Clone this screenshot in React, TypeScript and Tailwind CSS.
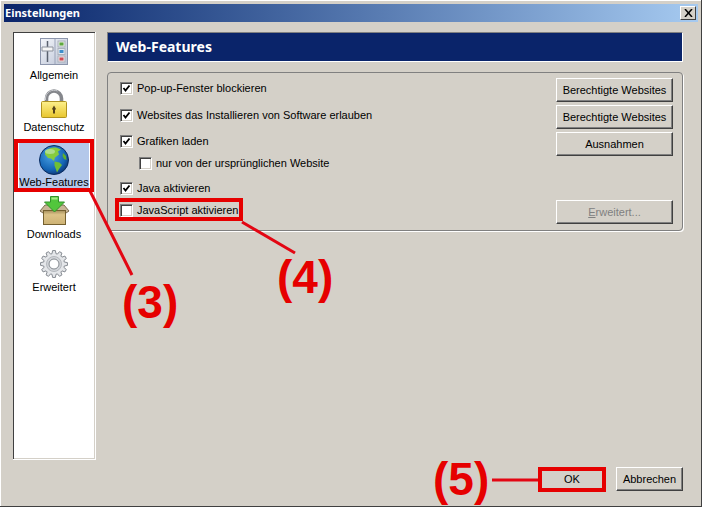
import React from "react";

const sunken = "shadow-[inset_1px_1px_0_#404040,inset_-1px_-1px_0_#d4d0c8]";

function SlidersIcon() {
  return (
    <svg width="28" height="27" viewBox="0 0 28 27" className="shrink-0">
      <defs>
        <linearGradient id="panel" x1="0" y1="0" x2="1" y2="1">
          <stop offset="0" stopColor="#f3f5fa" />
          <stop offset="1" stopColor="#bcc4d6" />
        </linearGradient>
      </defs>
      <rect x="0.5" y="0.5" width="27" height="26" fill="url(#panel)" stroke="#8d96ac" />
      <path d="M15 1v25" stroke="#9aa3b8" />
      <path d="M7.500 3v21" stroke="#59606e" strokeWidth="1.500" />
      <path d="M2 9h11v4H2z" fill="#f6f6f6" stroke="#8c919c" />
      <rect x="18" y="3" width="7" height="6" fill="#e6ebe4" stroke="#aab2bc" />
      <rect x="19.500" y="4.500" width="4" height="3" fill="#5da83d" />
      <rect x="18" y="10.500" width="7" height="6" fill="#e2e8f0" stroke="#aab2bc" />
      <rect x="19.500" y="12" width="4" height="3" fill="#3d8ecb" />
      <rect x="18" y="18" width="7" height="6" fill="#efe2e4" stroke="#aab2bc" />
      <rect x="19.500" y="19.500" width="4" height="3" fill="#cf4a52" />
    </svg>
  );
}

function LockIcon() {
  return (
    <svg width="26" height="29" viewBox="0 0 26 29" className="shrink-0">
      <defs>
        <linearGradient id="brass" x1="0" y1="0" x2="0" y2="1">
          <stop offset="0" stopColor="#fdf08c" />
          <stop offset="1" stopColor="#e8c62e" />
        </linearGradient>
      </defs>
      <path d="M5.500 14V9.500a7.500 7.500 0 0 1 15 0V14" fill="none" stroke="#85878c" strokeWidth="3.600" />
      <path d="M4.500 11V9a8.500 8.500 0 0 1 12-7" fill="none" stroke="#c9cbd0" strokeWidth="1" />
      <rect x="0.500" y="12.500" width="25" height="16" rx="1" fill="url(#brass)" stroke="#b09420" />
      <path d="M13 16.500l2 3.500-1 1v3.500h-2V21l-1-1z" fill="#54421a" />
    </svg>
  );
}

function GlobeIcon() {
  return (
    <svg width="30" height="30" viewBox="0 0 30 30" className="shrink-0">
      <defs>
        <radialGradient id="sea" cx="0.4" cy="0.35" r="0.7">
          <stop offset="0" stopColor="#4aa2e4" />
          <stop offset="0.7" stopColor="#1464b4" />
          <stop offset="1" stopColor="#0c3270" />
        </radialGradient>
      </defs>
      <circle cx="15" cy="15" r="14.500" fill="url(#sea)" stroke="#0a2c60" />
      <path d="M6 6c3-2.500 7-4 11-3.500l5 2-3 2 1 3-4 3-1 3.500-3-2.500-3-.5-3-3.500z" fill="#86cc3e" />
      <path d="M15.500 16.500l5 1 2.500 2.500-3 4-2 3.500-1-3-1.500-4z" fill="#6fbe34" />
      <path d="M24 8l3 3 .5 4-2.500-1-1.500-3z" fill="#5fae2e" />
      <ellipse cx="11" cy="6.500" rx="5" ry="2.500" fill="#e8f8ff" opacity="0.4" />
    </svg>
  );
}

function BoxIcon() {
  return (
    <svg width="31" height="29" viewBox="0 0 31 29" className="shrink-0">
      <defs>
        <linearGradient id="carton" x1="0" y1="0" x2="0" y2="1">
          <stop offset="0" stopColor="#a58e5c" />
          <stop offset="0.3" stopColor="#dcc388" />
          <stop offset="1" stopColor="#cdb274" />
        </linearGradient>
      </defs>
      <path d="M1 15l5-6h19l5 6-3 2H4z" fill="#c8b596" stroke="#7c6c50" />
      <rect x="4.500" y="14.500" width="22" height="14" fill="url(#carton)" stroke="#75602f" />
      <path d="M11.500.500h8v5.500h6l-10 10-10-10h6z" fill="#52c63c" stroke="#33912a" />
      <path d="M12.500 1.500h6v2h-6z" fill="#a4ea84" />
    </svg>
  );
}

// twelve teeth, outer radius 13.5, root radius 10.5
function gearPath() {
  const pts: string[] = [];
  for (let i = 0; i < 12; i++) {
    const a = (i * Math.PI) / 6;
    const step = Math.PI / 6;
    const at = (r: number, t: number) => `${(14 + r * Math.cos(t)).toFixed(2)} ${(14 + r * Math.sin(t)).toFixed(2)}`;
    pts.push(at(10.5, a - step * 0.36), at(13.5, a - step * 0.2), at(13.5, a + step * 0.2), at(10.5, a + step * 0.36));
  }
  return `M${pts.join("L")}Z`;
}

function GearIcon() {
  return (
    <svg width="28" height="28" viewBox="0 0 28 28" className="shrink-0">
      <path d={gearPath()} fill="#e4e6e9" stroke="#868b92" />
      <circle cx="14" cy="14" r="7.500" fill="#d2d5d9" stroke="#b4b8bd" />
      <circle cx="14" cy="14" r="5" fill="#ffffff" stroke="#858a90" />
    </svg>
  );
}

function NavItem({ icon, label, h, gap, active }: { icon: React.ReactNode; label: string; h: string; gap?: string; active?: boolean }) {
  return (
    <div className={`flex flex-col items-center justify-end whitespace-nowrap ${h}`}>
      {active ? (
        <div className="flex h-[47px] w-[70px] flex-col items-center bg-[#b4c8ea] pt-[3px]">
          {icon}
          <span className="mt-[1px] leading-[13px]">{label}</span>
        </div>
      ) : (
        <>
          {icon}
          <span className={`leading-[13px] ${gap ?? "mt-[3px]"}`}>{label}</span>
        </>
      )}
    </div>
  );
}

function Check({ checked, label, className }: { checked?: boolean; label: string; className?: string }) {
  return (
    <div className={`flex h-4 items-center gap-1 ${className ?? ""}`}>
      <div className="h-[13px] w-[13px] shrink-0 border border-t-[#808080] border-r-white border-b-white border-l-[#808080] bg-white shadow-[inset_1px_1px_0_#404040,inset_-1px_-1px_0_#d4d0c8]">
        {checked && (
          <svg width="11" height="11" viewBox="0 0 11 11">
            <path d="M2.500 5l2 2.500 4-5" fill="none" stroke="#000" strokeWidth="1.800" />
          </svg>
        )}
      </div>
      <span className="whitespace-nowrap">{label}</span>
    </div>
  );
}

function Btn({ children, className }: { children: React.ReactNode; className?: string }) {
  return (
    <div
      className={`flex items-center justify-center border border-t-white border-r-[#404040] border-b-[#404040] border-l-white bg-[#d4d0c8] shadow-[inset_-1px_-1px_0_#808080] ${className ?? ""}`}
    >
      {children}
    </div>
  );
}

export default function App() {
  return (
    <div className="relative flex h-[507px] w-[702px] flex-col overflow-hidden border-r border-b border-r-[#404040] border-b-[#404040] bg-[#d4d0c8] pt-1 pl-1 font-['Liberation_Sans',sans-serif] text-[11px] text-black shadow-[inset_1px_1px_0_#fff]">
      {/* title bar */}
      <div className="mr-[3px] flex h-[18px] items-center justify-between bg-gradient-to-r from-[#0a246a] to-[#a6caf0] pr-[2px] pl-[1px]">
        <span className="font-['Noto_Sans',sans-serif] text-[11px] font-bold text-white">Einstellungen</span>
        <div className="flex h-[14px] w-[16px] items-center justify-center border border-t-white border-r-[#404040] border-b-[#404040] border-l-white bg-[#d4d0c8]">
          <svg width="9" height="8" viewBox="0 0 9 8">
            <path d="M1 0l7 8M8 0l-7 8" stroke="#000" strokeWidth="1.500" />
          </svg>
        </div>
      </div>

      <div className="flex flex-1 pt-[10px] pr-[18px] pl-[9px]">
        {/* sidebar */}
        <div className={`flex h-[428px] w-[83px] flex-col bg-white ${sunken} border-r border-b border-r-white border-b-white`}>
          <NavItem h="h-[50px]" gap="mt-[4px]" icon={<SlidersIcon />} label="Allgemein" />
          <NavItem h="h-[52px]" icon={<LockIcon />} label="Datenschutz" />
          <NavItem h="h-[55px]" icon={<GlobeIcon />} label="Web-Features" active />
          <NavItem h="h-[52px]" icon={<BoxIcon />} label="Downloads" />
          <NavItem h="h-[53px]" icon={<GearIcon />} label="Erweitert" />
        </div>

        {/* main */}
        <div className="ml-[11px] flex flex-1 flex-col pb-[15px]">
          <div className="flex h-[30px] items-center border border-t-[#808080] border-r-white border-b-white border-l-[#808080] bg-[#0a246a] pb-[2px] pl-2 font-['Noto_Sans',sans-serif] text-[14px] font-bold text-white">
            Web-Features
          </div>

          <div className="mt-[10px] flex h-[159px] justify-between rounded-[4px] border border-[#808080] pr-[9px] pl-3 shadow-[1px_1px_0_#fff]">
            <div className="flex flex-col pt-[7px]">
              <Check checked label="Pop-up-Fenster blockieren" />
              <Check checked label="Websites das Installieren von Software erlauben" className="mt-[11px]" />
              <Check checked label="Grafiken laden" className="mt-[10px]" />
              <Check label="nur von der ursprünglichen Website" className="mt-[6px] ml-[19px]" />
              <Check checked label="Java aktivieren" className="mt-[9px]" />
              <Check label="JavaScript aktivieren" className="mt-[6px]" />
            </div>
            <div className="flex w-[117px] flex-col pt-[5px]">
              <Btn className="h-6">Berechtigte Websites</Btn>
              <Btn className="mt-[3px] h-6">Berechtigte Websites</Btn>
              <Btn className="mt-[3px] h-6">Ausnahmen</Btn>
              <Btn className="mt-[44px] h-6 text-[#808080]">
                <span>
                  <span className="underline">E</span>rweitert...
                </span>
              </Btn>
            </div>
          </div>

          <div className="mt-auto flex justify-end gap-[10px]">
            <Btn className="h-[24px] w-[68px]">OK</Btn>
            <Btn className="h-[24px] w-[67px]">Abbrechen</Btn>
          </div>
        </div>
      </div>

      {/* annotations */}
      <svg className="pointer-events-none absolute top-0 left-0" width="702" height="507">
        <g fill="none" stroke="#e30613" strokeWidth="3">
          <path d="M90 191L132 275" />
          <path d="M242 222L295 253" />
          <path d="M492 480H538" />
        </g>
      </svg>
      <div className="absolute top-[139px] left-[14px] h-[53px] w-[80px] border-4 border-[#e60000]" />
      <div className="absolute top-[198px] left-[115px] h-[23px] w-[128px] border-4 border-[#e60000]" />
      <div className="absolute top-[467px] left-[538px] h-[25px] w-[68px] border-4 border-[#e60000]" />
      <span className="absolute top-[276px] left-[122px] text-[46px] leading-[52px] font-bold text-[#e60000]">(3)</span>
      <span className="absolute top-[251px] left-[277px] text-[46px] leading-[52px] font-bold text-[#e60000]">(4)</span>
      <span className="absolute top-[453px] left-[433px] text-[46px] leading-[52px] font-bold text-[#e60000]">(5)</span>
    </div>
  );
}
